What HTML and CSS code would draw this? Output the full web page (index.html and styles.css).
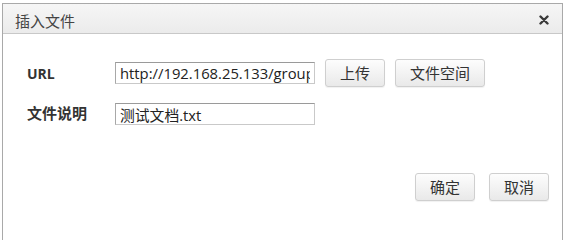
FILE: index.html
```html
<!DOCTYPE html>
<html lang="zh-CN">
<head>
<meta charset="utf-8">
<title>插入文件</title>
<link rel="stylesheet" href="styles.css">
</head>
<body>
<div class="dialog">
  <div class="dialog-header">
    <span class="dialog-title">插入文件</span>
    <span class="dialog-close" title="关闭">
      <svg width="10" height="10" viewBox="0 0 10 10"><path d="M1.5 1.5 L8.5 8.5 M8.5 1.5 L1.5 8.5" stroke="#3a3a3a" stroke-width="2.4" stroke-linecap="round"/></svg>
    </span>
  </div>
  <div class="dialog-body">
    <div class="form-row">
      <label class="form-label label-latin">URL</label>
      <input class="text-input" type="text" value="http://192.168.25.133/group1/M00/00/00/wKgZhVk.txt">
      <button class="btn btn-first">上传</button>
      <button class="btn">文件空间</button>
    </div>
    <div class="form-row row-second">
      <label class="form-label">文件说明</label>
      <input class="text-input" type="text" value="测试文档.txt">
    </div>
  </div>
  <div class="dialog-footer">
    <button class="btn">确定</button>
    <button class="btn">取消</button>
  </div>
</div>
</body>
</html>
```
FILE: styles.css
```css
html, body {
  margin: 0;
  padding: 0;
  height: 100%;
  background: #fff;
  overflow: hidden;
}
body {
  box-sizing: border-box;
  padding: 3px 0 0 2px;
  font-family: "Open Sans", "Noto Sans CJK SC", sans-serif;
  color: #333;
}
.dialog {
  box-sizing: border-box;
  width: 561px;
  height: 100%;
  border: 1px solid #a9a9a9;
  border-bottom: none;
  background: #fff;
  display: flex;
  flex-direction: column;
}
.dialog-header {
  height: 29px;
  flex: none;
  border-bottom: 1px solid #c8c8c8;
  background: linear-gradient(#f6f6f6, #ebebeb);
  display: flex;
  align-items: center;
  justify-content: space-between;
  padding: 0 12px 0 12px;
}
.dialog-title {
  font-size: 15px;
  color: #444;
  padding-top: 3px;
}
.dialog-close {
  display: flex;
  align-items: center;
  padding-top: 3px;
  padding-right: 1px;
}
.dialog-body {
  padding: 25px 0 0 24px;
}
.form-row {
  display: flex;
  align-items: center;
}
.row-second {
  margin-top: 16px;
}
.form-label {
  width: 88px;
  font-size: 15px;
  font-weight: bold;
  color: #333;
}
.label-latin {
  font-size: 14px;
}
.row-second .form-label {
  margin-top: -4px;
}
.text-input {
  box-sizing: border-box;
  width: 200px;
  height: 22px;
  margin: 0;
  padding: 0 4px;
  border: 1px solid #c9c9c9;
  border-top-color: #9a9a9a;
  border-left-color: #a8a8a8;
  font-family: "Open Sans", "Noto Sans CJK SC", sans-serif;
  font-size: 14.8px;
  color: #222;
  outline: none;
}
.btn {
  box-sizing: border-box;
  height: 28px;
  margin: 0;
  padding: 0 14px;
  border: 1px solid #cfcfcf;
  border-radius: 3px;
  background: linear-gradient(#fdfdfd, #e9e9e9);
  box-shadow: 0 1px 1px rgba(0, 0, 0, 0.06);
  font-family: "Open Sans", "Noto Sans CJK SC", sans-serif;
  font-size: 15px;
  color: #333;
  line-height: 26px;
}
.form-row .btn-first {
  margin-left: 10px;
}
.form-row .btn + .btn {
  margin-left: 10px;
}
.dialog-footer {
  display: flex;
  justify-content: flex-end;
  gap: 14px;
  padding: 48px 13px 0 0;
}
```
